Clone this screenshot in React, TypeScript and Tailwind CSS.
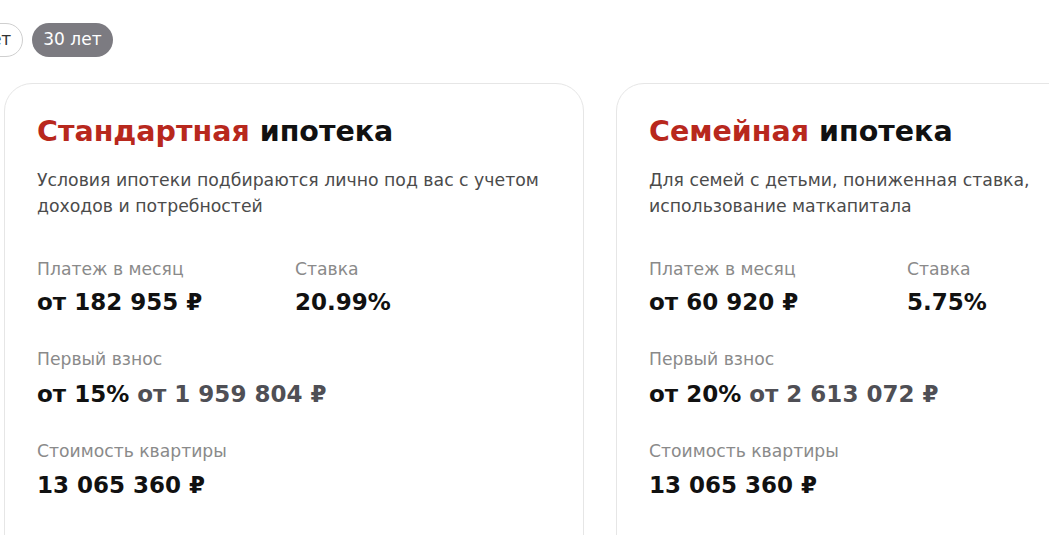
const cards = [
  {
    accent: "Стандартная",
    desc: "Условия ипотеки подбираются лично под вас с учетом доходов и потребностей",
    descW: "w-[516px]",
    payment: "от 182 955 ₽",
    rate: "20.99%",
    pct: "от 15%",
    down: "от 1 959 804 ₽",
    price: "13 065 360 ₽",
  },
  {
    accent: "Семейная",
    desc: "Для семей с детьми, пониженная ставка, использование маткапитала",
    descW: "w-[470px]",
    payment: "от 60 920 ₽",
    rate: "5.75%",
    pct: "от 20%",
    down: "от 2 613 072 ₽",
    price: "13 065 360 ₽",
  },
];

function Card({ c }: { c: (typeof cards)[number] }) {
  return (
    <div className="w-[580px] shrink-0 h-[480px] rounded-[28px] border border-[#e6e6e6] bg-white px-8 pt-[28px]">
      <h2 className="text-[28.5px] font-bold leading-[40px] text-[#111]">
        <span className="text-[#b8281d]">{c.accent}</span> ипотека
      </h2>
      <p className={`mt-[15px] ${c.descW} text-[17.3px] leading-[26px] text-[#4b4b4b]`}>{c.desc}</p>

      <div className="mt-[39px] flex">
        <div className="w-[258px]">
          <div className="text-[17.2px] leading-[22px] text-[#8a8a8a]">Платеж в месяц</div>
          <div className="mt-[7px] text-[23px] font-bold leading-[30px] text-[#111]">{c.payment}</div>
        </div>
        <div>
          <div className="text-[17.2px] leading-[22px] text-[#8a8a8a]">Ставка</div>
          <div className="mt-[7px] text-[23px] font-bold leading-[30px] text-[#111]">{c.rate}</div>
        </div>
      </div>

      <div className="mt-[31px]">
        <div className="text-[17.2px] leading-[22px] text-[#8a8a8a]">Первый взнос</div>
        <div className="mt-[9px] text-[23px] font-bold leading-[30px] text-[#111]">
          {c.pct} <span className="text-[#4f4f55]">{c.down}</span>
        </div>
      </div>

      <div className="mt-[31px]">
        <div className="text-[17.2px] leading-[22px] text-[#8a8a8a]">Стоимость квартиры</div>
        <div className="mt-[8px] text-[23px] font-bold leading-[30px] text-[#111]">{c.price}</div>
      </div>
    </div>
  );
}

export default function App() {
  return (
    <div
      className="h-[535px] w-[1049px] overflow-hidden bg-white"
      style={{ fontFamily: "'DejaVu Sans', 'Noto Sans', sans-serif" }}
    >
      {/* term chips */}
      <div className="ml-[-59px] mt-[23px] flex gap-[9px]">
        <div className="flex h-[34px] items-center rounded-full border border-[#cfcfcf] px-[11px] text-[17px] text-[#333]">
          40 лет
        </div>
        <div className="flex h-[34px] items-center rounded-full bg-[#7c7b81] px-[11px] text-[17px] text-white">
          30 лет
        </div>
      </div>

      {/* cards */}
      <div className="ml-[4px] mt-[26px] flex gap-8">
        {cards.map((c) => (
          <Card key={c.accent} c={c} />
        ))}
      </div>
    </div>
  );
}
